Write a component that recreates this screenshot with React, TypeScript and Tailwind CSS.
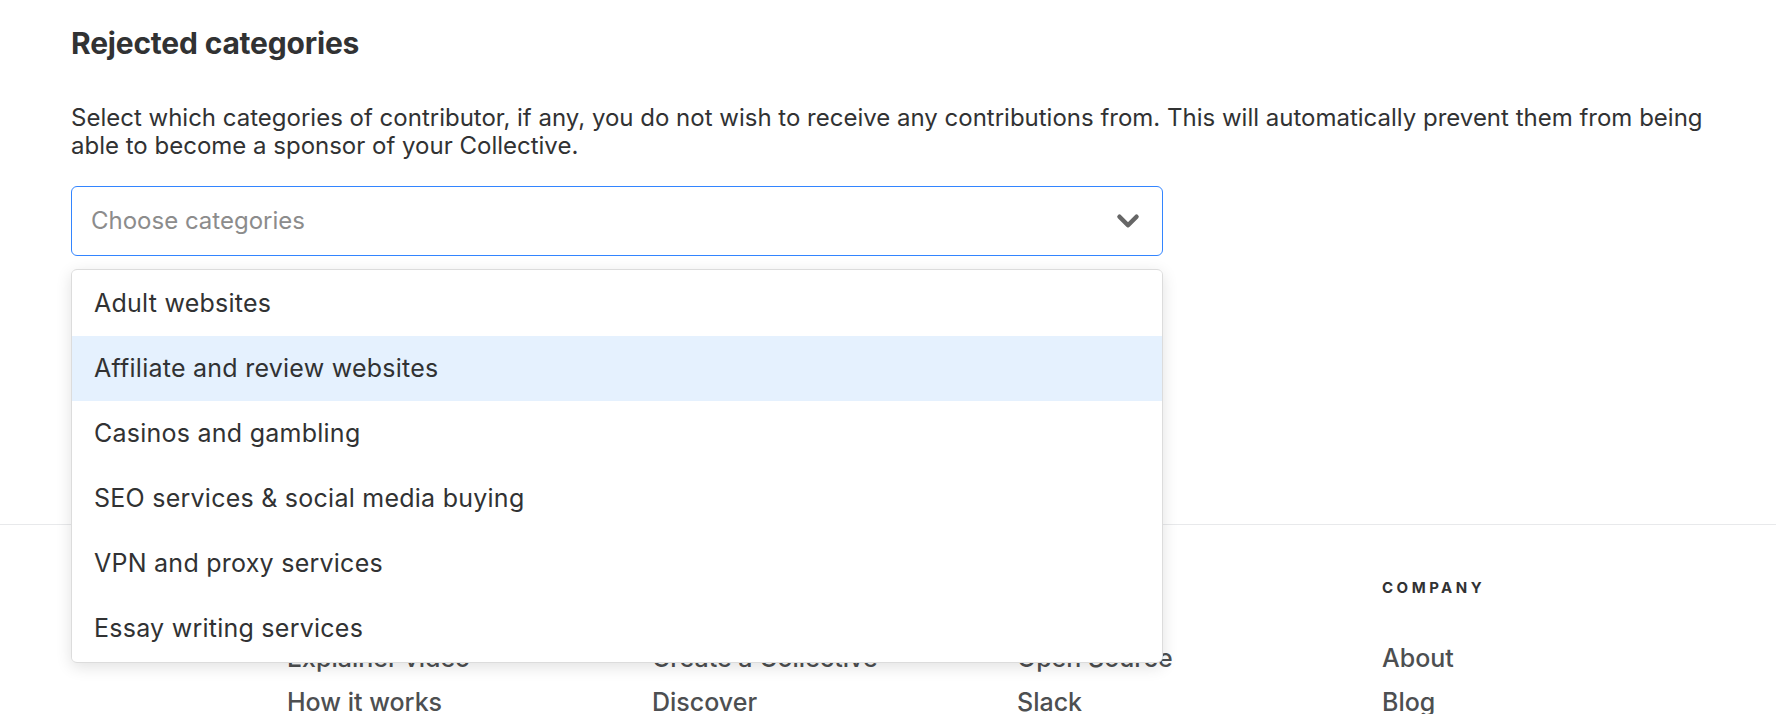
import React, { useState } from 'react';
import { ChevronDown } from 'lucide-react';

const categories = [
  'Adult websites',
  'Affiliate and review websites',
  'Casinos and gambling',
  'SEO services & social media buying',
  'VPN and proxy services',
  'Essay writing services',
];

const footerColumns = [
  { title: 'Platform', links: ['Explainer video', 'How it works'] },
  { title: 'Join', links: ['Create a Collective', 'Discover'] },
  { title: 'Community', links: ['Open Source', 'Slack'] },
  { title: 'Company', links: ['About', 'Blog'] },
];

export default function App() {
  const [hovered, setHovered] = useState(1);

  return (
    <div className="h-screen bg-white font-['Inter','Liberation_Sans',sans-serif] text-[#313233] overflow-hidden">
      {/* Settings section */}
      <div className="h-[524px] pl-[71px] pt-[25px]">
        <h2 className="text-[30px] leading-[36px] font-bold tracking-[-0.2px]">Rejected categories</h2>
        <p className="mt-[43px] text-[24px] leading-[28px] max-w-[1640px]">
          Select which categories of contributor, if any, you do not wish to receive any contributions from. This will
          automatically prevent them from being able to become a sponsor of your Collective.
        </p>

        <div className="relative mt-[26px] w-[1092px]">
          <div className="h-[70px] flex items-center justify-between pl-[19px] pr-[17px] rounded-[6px] border border-[#3385FF] bg-white">
            <span className="text-[24px] text-[#8c8c8c]">Choose categories</span>
            <ChevronDown size={34} strokeWidth={3.2} className="text-[#666666]" />
          </div>

          <div className="absolute left-0 right-0 top-[83px] z-10 py-[1px] rounded-[6px] border border-[#dcdcdc] bg-white shadow-[0_4px_16px_rgba(0,0,0,0.12)] overflow-hidden">
            {categories.map((c, i) => (
              <div
                key={c}
                onMouseEnter={() => setHovered(i)}
                className={`h-[65px] flex items-center pl-[22px] text-[25px] tracking-[0.25px] ${hovered === i ? 'bg-[#E5F1FE]' : 'bg-white'}`}
              >
                {c}
              </div>
            ))}
          </div>
        </div>
      </div>

      {/* Footer */}
      <footer className="border-t border-[#e8e9eb] pl-[287px] pt-[53px]">
        <div className="grid grid-cols-[365px_365px_365px_365px]">
          {footerColumns.map(col => (
            <div key={col.title}>
              <div className="text-[15px] leading-[20px] font-bold uppercase tracking-[3.5px] text-[#313233]">{col.title}</div>
              <ul className="mt-[48px] space-y-[20px]">
                {col.links.map(l => (
                  <li key={l} className="text-[25px] leading-[24px] font-medium text-[#4d4f51]">{l}</li>
                ))}
              </ul>
            </div>
          ))}
        </div>
      </footer>
    </div>
  );
}
